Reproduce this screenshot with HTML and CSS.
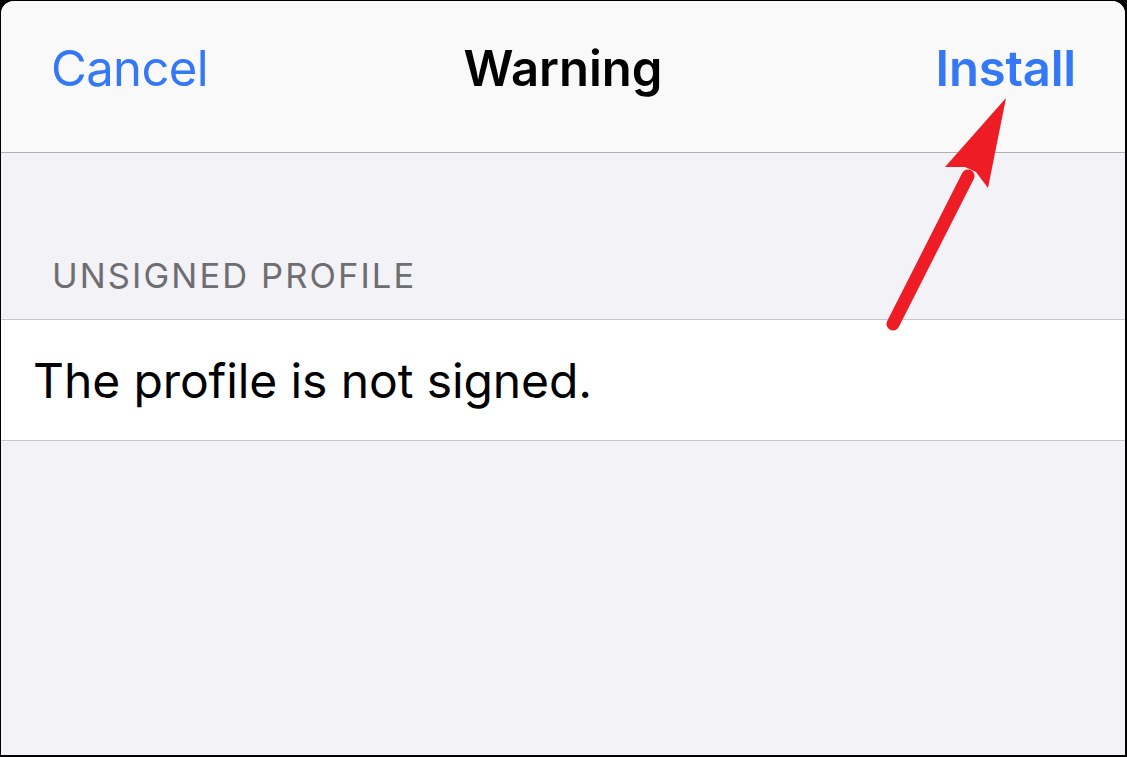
FILE: index.html
```html
<!DOCTYPE html>
<html lang="en">
<head>
<meta charset="utf-8">
<title>Warning</title>
<link rel="stylesheet" href="styles.css">
</head>
<body>
<div class="sheet">
  <header class="navbar">
    <span class="nav-btn cancel">Cancel</span>
    <span class="nav-title">Warning</span>
    <span class="nav-btn install">Install</span>
  </header>
  <div class="section-header">UNSIGNED PROFILE</div>
  <div class="cell">The profile is not signed.</div>
  <div class="filler"></div>
  <svg class="annotation" width="1127" height="757" viewBox="0 0 1127 757">
    <line x1="893" y1="324" x2="968" y2="176" stroke="#ee1d25" stroke-width="13" stroke-linecap="round"/>
    <polygon points="1006,98 988,188 976,172 965,167 945,167" fill="#ee1d25"/>
  </svg>
</div>
</body>
</html>
```
FILE: styles.css
```css
html, body {
  margin: 0;
  padding: 0;
  height: 100%;
  background: #000;
}
body {
  font-family: Inter, "Noto Sans", "Liberation Sans", sans-serif;
  overflow: hidden;
}
.sheet {
  position: relative;
  margin: 1px 2px 0 1px;
  height: 754px;
  background: #f2f2f7;
  border-radius: 13px 13px 0 0;
  overflow: hidden;
  display: flex;
  flex-direction: column;
}
.navbar {
  height: 151px;
  flex: none;
  background: #f9f9f9;
  border-bottom: 1px solid #b2b2b4;
  display: flex;
  align-items: center;
  justify-content: space-between;
  padding: 0 49px 0 50px;
  box-sizing: content-box;
  position: relative;
}
.nav-btn {
  font-size: 49px;
  color: #3478f6;
  letter-spacing: -0.6px;
  padding-bottom: 16px;
}
.install {
  font-weight: 600;
  letter-spacing: -0.2px;
}
.nav-title {
  position: absolute;
  left: 0;
  right: 0;
  text-align: center;
  font-size: 49px;
  font-weight: 600;
  color: #000;
  padding-bottom: 16px;
  pointer-events: none;
}
.section-header {
  height: 167px;
  flex: none;
  box-sizing: border-box;
  display: flex;
  align-items: flex-end;
  padding: 0 0 23px 51px;
  font-size: 34.5px;
  color: #6d6d72;
  letter-spacing: 2.1px;
  border-bottom: 1px solid #c8c7cc;
}
.cell {
  height: 120px;
  flex: none;
  background: #fff;
  border-bottom: 1px solid #c8c7cc;
  display: flex;
  align-items: center;
  padding-left: 32px;
  font-size: 48px;
  color: #000;
  letter-spacing: -0.1px;
}
.filler {
  flex: 1;
}
.annotation {
  position: absolute;
  left: -1px;
  top: -1px;
  pointer-events: none;
}
```
